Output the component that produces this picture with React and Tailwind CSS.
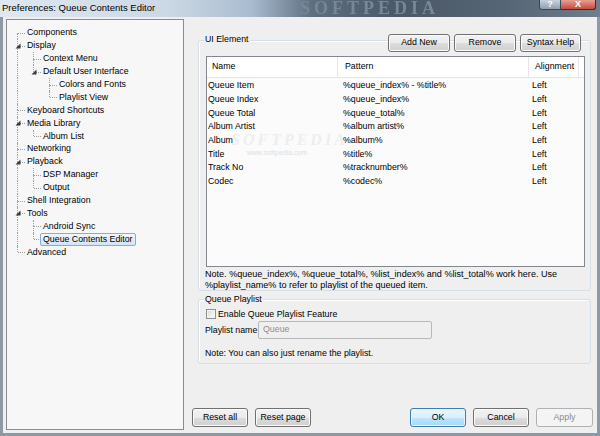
import React from "react";

const tree = [
  { t: "Components" },
  {
    t: "Display",
    c: [
      { t: "Context Menu" },
      { t: "Default User Interface", c: [{ t: "Colors and Fonts" }, { t: "Playlist View" }] },
    ],
  },
  { t: "Keyboard Shortcuts" },
  { t: "Media Library", c: [{ t: "Album List" }] },
  { t: "Networking" },
  { t: "Playback", c: [{ t: "DSP Manager" }, { t: "Output" }] },
  { t: "Shell Integration" },
  { t: "Tools", c: [{ t: "Android Sync" }, { t: "Queue Contents Editor", sel: true }] },
  { t: "Advanced" },
];

function flatten(nodes, level, anc, out) {
  nodes.forEach((n, i) => {
    const last = i === nodes.length - 1;
    const first = level === 0 && i === 0;
    out.push({ ...n, level, last, first, anc: [...anc] });
    if (n.c) flatten(n.c, level + 1, [...anc, !last], out);
  });
  return out;
}

const rows = flatten(tree, 0, [], []);

const items = [
  ["Queue Item", "%queue_index% - %title%"],
  ["Queue Index", "%queue_index%"],
  ["Queue Total", "%queue_total%"],
  ["Album Artist", "%album artist%"],
  ["Album", "%album%"],
  ["Title", "%title%"],
  ["Track No", "%tracknumber%"],
  ["Codec", "%codec%"],
];

function Btn({ children, className = "", kind = "normal" }) {
  const styles = {
    normal:
      "border-[#707070] bg-[linear-gradient(#f2f2f2_0%,#ebebeb_50%,#dddddd_50%,#cfcfcf_100%)] shadow-[inset_0_0_0_1px_#fbfbfb] text-black",
    def:
      "border-[#3c7fb1] bg-[linear-gradient(#eaf6fd_0%,#d9f0fc_50%,#bee6fd_50%,#a7d9f5_100%)] shadow-[inset_0_0_0_1px_#e3f4fc] text-black",
    dis: "border-[#adb2b5] bg-[#f4f4f4] text-[#8a8a8a]",
  };
  return (
    <div
      className={`flex items-center justify-center rounded-[3px] border ${styles[kind]} ${className}`}
    >
      {children}
    </div>
  );
}

function TreeRow({ r }) {
  return (
    <div className="flex h-[12.9px] items-stretch whitespace-nowrap">
      {r.anc.map((cont, k) => (
        <div key={k} className="relative w-[16px] shrink-0">
          {cont && (
            <div className="absolute left-[8px] top-0 bottom-0 border-l border-dotted border-[#a0a0a0]" />
          )}
        </div>
      ))}
      <div className="relative w-[16px] shrink-0">
        {!r.first && (
          <div className="absolute left-[8px] top-0 h-1/2 border-l border-dotted border-[#a0a0a0]" />
        )}
        {!r.last && (
          <div className="absolute left-[8px] top-1/2 bottom-0 border-l border-dotted border-[#a0a0a0]" />
        )}
        <div className="absolute left-[9px] right-0 top-1/2 border-t border-dotted border-[#a0a0a0]" />
        {r.c && (
          <svg
            className="absolute left-[6px] top-[3.5px]"
            width="6"
            height="6"
            viewBox="0 0 6 6"
          >
            <polygon points="5.5,0.5 5.5,5.5 0.5,5.5" fill="#3a3a3a" />
          </svg>
        )}
      </div>
      <span
        className={`-ml-[1px] flex items-center px-[2px] border rounded-[2px] leading-[11px] ${
          r.sel
            ? "border-[#84acdd] bg-[linear-gradient(#f1f7fe,#d0e4fb)]"
            : "border-transparent"
        }`}
      >
        {r.t}
      </span>
    </div>
  );
}

export default function App() {
  return (
    <div className="w-[600px] h-[436px] flex flex-col bg-[#8d99a5] overflow-hidden font-['Liberation_Sans',Arial,sans-serif] text-[8.8px] text-black">
      {/* Title bar */}
      <div className="relative h-[17px] shrink-0 flex items-start overflow-hidden bg-[linear-gradient(90deg,#dfe8f1_0%,#cbd8e5_28%,#a9bccf_42%,#5e6f80_52%,#4a5867_66%,#566575_84%,#6f7e8d_100%)]">
        <span className="pl-[2px] pt-[2px] text-[9.5px] leading-[11px] text-black whitespace-nowrap">
          Preferences: Queue Contents Editor
        </span>
        <span className="absolute left-[300px] top-[-2px] text-[18px] font-bold tracking-[4px] text-[#76879a] blur-[0.6px] font-['Liberation_Serif',serif] leading-[20px] whitespace-nowrap">
          SOFTPEDIA
        </span>
        <div className="relative ml-auto mr-[4px] flex">
          <div className="w-[22px] h-[10px] flex items-center justify-center border border-t-0 border-[#3c4a58] rounded-bl-[3px] bg-[linear-gradient(#c9d3dd,#8f9eae)] text-white text-[9px] font-bold leading-[9px]">
            ?
          </div>
          <div className="w-[35px] h-[10px] flex items-center justify-center border border-t-0 border-l-0 border-[#5a2320] rounded-br-[3px] bg-[linear-gradient(#e5a093,#c74a3b)] text-white text-[9px] font-bold leading-[9px]">
            X
          </div>
        </div>
      </div>

      {/* Body */}
      <div className="flex-1 mx-[3px] mb-[3px] bg-[#efefef] flex">
        {/* Tree */}
        <div className="ml-[3px] mt-[2px] w-[178px] h-[411px] shrink-0 border border-[#898c95] bg-[#f7f7f7] pt-[6.5px] pl-[2px]">
          {rows.map((r, i) => (
            <TreeRow key={i} r={r} />
          ))}
        </div>

        {/* Right column */}
        <div className="ml-[6px] flex-1 flex flex-col">
          {/* UI Element group */}
          <div className="mt-[23px] ml-[8px] w-[393px] h-[251px] border border-[#d5dfe5] rounded-[3px] shadow-[inset_1px_1px_0_#ffffff] flex flex-col">
            <div className="-mt-[7px] h-[18px] flex items-start">
              <span className="ml-[5px] px-[1px] bg-[#efefef] leading-[11px]">UI Element</span>
              <div className="ml-auto mr-[9px] flex gap-[4px] h-[18px]">
                <Btn className="w-[62px]">Add New</Btn>
                <Btn className="w-[62px]">Remove</Btn>
                <Btn className="w-[61px]">Syntax Help</Btn>
              </div>
            </div>
            <div className="relative ml-[7px] mt-[4px] w-[379px] h-[211px] border border-[#828790] bg-[#fbfbfb] flex flex-col">
              <div className="flex h-[21px] border-b border-[#e5e5e5] bg-white shrink-0">
                <div className="w-[131px] pl-[5px] flex items-center border-r border-[#e3e6ea]">Name</div>
                <div className="w-[191px] pl-[7px] flex items-center border-r border-[#e3e6ea]">Pattern</div>
                <div className="w-[50px] pl-[6px] flex items-center border-r border-[#e3e6ea]">Alignment</div>
              </div>
              <span className="absolute left-[24px] top-[75px] text-[16px] italic font-bold tracking-[3px] text-[#eeeeee] font-['Liberation_Serif',serif] leading-[16px]">
                SOFTPEDIA
              </span>
              <span className="absolute left-[40px] top-[92px] text-[7px] text-[#e0e0e0] leading-[8px]">
                www.softpedia.com
              </span>
              <div className="relative pt-[1px]">
                {items.map(([n, p]) => (
                  <div key={n} className="flex h-[13.7px] items-center whitespace-nowrap">
                    <div className="w-[131px] pl-[1px]">{n}</div>
                    <div className="w-[191px] pl-[5px]">{p}</div>
                    <div className="w-[50px] pl-[3px]">Left</div>
                  </div>
                ))}
              </div>
            </div>
            <div className="ml-[6px] mt-[2px] text-[9.05px] leading-[10.5px] whitespace-nowrap">
              Note. %queue_index%, %queue_total%, %list_index% and %list_total% work here. Use
              <br />
              %playlist_name% to refer to playlist of the queued item.
            </div>
          </div>

          {/* Queue Playlist group */}
          <div className="mt-[8px] ml-[8px] w-[393px] h-[65px] border border-[#d5dfe5] rounded-[3px] shadow-[inset_1px_1px_0_#ffffff] flex flex-col">
            <span className="-mt-[6px] ml-[5px] px-[1px] self-start bg-[#efefef] leading-[11px]">
              Queue Playlist
            </span>
            <div className="mt-[3.5px] ml-[7px] h-[11px] flex items-center">
              <div className="w-[10px] h-[10px] border border-[#8e8f8f] bg-[linear-gradient(135deg,#d9d9d9,#fdfdfd)] shadow-[inset_0_0_0_1px_#f4f4f4]" />
              <span className="ml-[2px] leading-[11px]">Enable Queue Playlist Feature</span>
            </div>
            <div className="mt-[1.5px] ml-[6px] h-[18px] flex items-center">
              <span className="w-[53px] leading-[11px]">Playlist name</span>
              <div className="w-[174px] h-[18px] border border-[#b9b9b9] rounded-[2px] bg-[#efefef] flex items-center pl-[4px] text-[#8d8d8d]">
                Queue
              </div>
            </div>
            <div className="mt-[8.5px] ml-[6px] leading-[11px]">
              Note: You can also just rename the playlist.
            </div>
          </div>

          <div className="flex-1" />

          {/* Bottom buttons */}
          <div className="mb-[6px] h-[19px] pl-[2px] pr-[4px] flex gap-[7px]">
            <Btn className="w-[56px]">Reset all</Btn>
            <Btn className="w-[56px]">Reset page</Btn>
            <div className="flex-1" />
            <Btn className="w-[56px]" kind="def">OK</Btn>
            <Btn className="w-[56px]">Cancel</Btn>
            <Btn className="w-[57px]" kind="dis">Apply</Btn>
          </div>
        </div>
      </div>
    </div>
  );
}
